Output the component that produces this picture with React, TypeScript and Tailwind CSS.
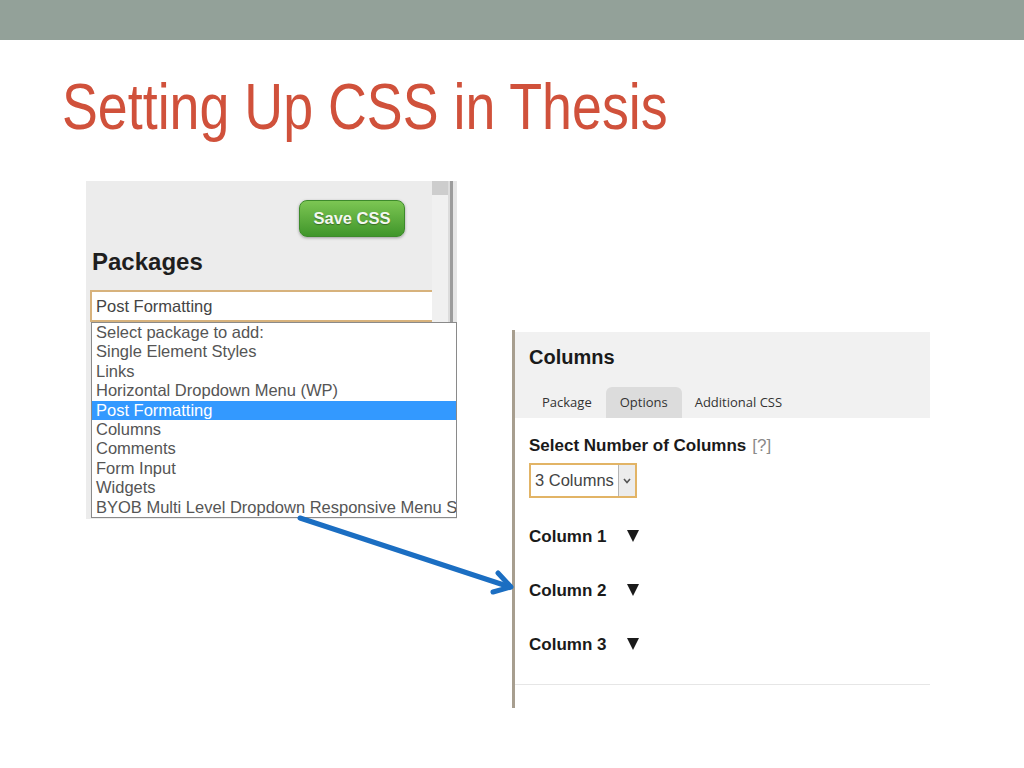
import React from 'react';

const packages = [
  'Select package to add:',
  'Single Element Styles',
  'Links',
  'Horizontal Dropdown Menu (WP)',
  'Post Formatting',
  'Columns',
  'Comments',
  'Form Input',
  'Widgets',
  'BYOB Multi Level Dropdown Responsive Menu S',
];

const PackagesShot = () => (
  <div className="w-[371px] h-[338px] bg-[#ececec] flex flex-col font-['Liberation_Sans',Arial,sans-serif]">
    <div className="flex h-[141px]">
      <div className="w-[346px] flex flex-col">
        <div className="flex justify-end pr-[27px] pt-[19px]">
          <div className="w-[106px] h-[37px] rounded-[8px] border border-[#3d8a2b] bg-gradient-to-b from-[#7cc653] to-[#3f962a] shadow-[0_1px_3px_rgba(0,0,0,0.35)] flex items-center justify-center text-[16.5px] font-bold text-[#f4f8f0] [text-shadow:0_1px_1px_rgba(0,0,0,0.35)]">
            Save CSS
          </div>
        </div>
        <div className="ml-[6px] mt-[13px] text-[24px] leading-none font-bold text-[#1e1e1e]">Packages</div>
        <div className="ml-[4px] mt-[16px] h-[34px] bg-white border-2 border-r-0 border-[#d7b27c] flex items-center pl-[4px] text-[16.5px] text-[#444]">
          Post Formatting
        </div>
      </div>
      <div className="flex">
        <div className="w-[16px] bg-[#f0f0f0] flex flex-col">
          <div className="h-[14px] bg-[#cdcdcd]" />
        </div>
        <div className="w-[2px] bg-[#dcdcdc]" />
        <div className="w-[3px] bg-[#9c9c9c]" />
        <div className="w-[4px] bg-[#e6e6e6]" />
      </div>
    </div>
    <div className="ml-[5px] h-[196px] bg-white border border-[#8a8a8a] overflow-hidden">
      {packages.map((p) => (
        <div
          key={p}
          className={
            p === 'Post Formatting'
              ? 'h-[19.4px] leading-[19.4px] pl-[4px] text-[16.5px] whitespace-nowrap bg-[#3399ff] text-white'
              : 'h-[19.4px] leading-[19.4px] pl-[4px] text-[16.5px] whitespace-nowrap text-[#555]'
          }
        >
          {p}
        </div>
      ))}
    </div>
  </div>
);

const Triangle = () => (
  <svg width="12" height="12" viewBox="0 0 12 12" className="ml-[21px]">
    <polygon points="0,0 12,0 6,12" fill="#1a1a1a" />
  </svg>
);

const ColumnsShot = () => (
  <div className="w-[418px] h-[378px] bg-white border-l-[3px] border-[#a79e8f] flex flex-col font-['Liberation_Sans',Arial,sans-serif]">
    <div className="mt-[2px] bg-[#f1f1f1] h-[86px] flex flex-col">
      <div className="pl-[14px] pt-[15px] text-[20px] leading-none font-bold text-[#1a1a1a]">Columns</div>
      <div className="flex pl-[13px] mt-[20px] font-['Open_Sans',sans-serif] text-[13px] leading-[31px] text-[#333]">
        <div className="px-[14px]">Package</div>
        <div className="px-[14px] bg-[#dcdcdc] rounded-t-[6px]">Options</div>
        <div className="px-[13px]">Additional CSS</div>
      </div>
    </div>
    <div className="pl-[14px] flex flex-col items-start">
      <div className="mt-[19px] text-[17px] leading-none text-[#1a1a1a]">
        <span className="font-bold">Select Number of Columns</span>
        <span className="ml-[6px] text-[#8a8a8a]">[?]</span>
      </div>
      <div className="mt-[9px] h-[35px] w-[108px] border-2 border-[#e2b466] flex items-stretch">
        <div className="flex-1 flex items-center pl-[4px] text-[16.5px] text-[#444]">3 Columns</div>
        <div className="w-[17px] bg-[#ececec] border-l border-[#b5b5b5] flex items-center justify-center">
          <svg width="8" height="6" viewBox="0 0 8 6">
            <polyline points="1,1 4,4.5 7,1" fill="none" stroke="#555" strokeWidth="1.6" />
          </svg>
        </div>
      </div>
      <div className="mt-[30px] flex items-baseline text-[17px] leading-none font-bold text-[#1a1a1a]">
        <span>Column 1</span>
        <Triangle />
      </div>
      <div className="mt-[37px] flex items-baseline text-[17px] leading-none font-bold text-[#1a1a1a]">
        <span>Column 2</span>
        <Triangle />
      </div>
      <div className="mt-[37px] flex items-baseline text-[17px] leading-none font-bold text-[#1a1a1a]">
        <span>Column 3</span>
        <Triangle />
      </div>
    </div>
    <div className="mt-[31px] h-px bg-[#e6e6e6]" />
  </div>
);

export default function App() {
  return (
    <div className="relative w-[1024px] h-[768px] bg-white overflow-hidden font-['Liberation_Sans',Arial,sans-serif]">
      <div className="h-[40px] bg-[#93a199]" />
      <h1 className="mt-[35px] ml-[62px] text-[64px] leading-none text-[#d0513b] origin-left scale-x-[0.84] whitespace-nowrap">
        Setting Up CSS in Thesis
      </h1>
      <div className="flex items-start mt-[42px] ml-[86px]">
        <PackagesShot />
        <div className="ml-[55px] mt-[149px]">
          <ColumnsShot />
        </div>
      </div>
      <svg className="absolute inset-0 pointer-events-none" width="1024" height="768">
        <line x1="300" y1="518" x2="510" y2="587" stroke="#1b6ec2" strokeWidth="5" strokeLinecap="round" />
        <polyline points="493,592 511,587 498,573" fill="none" stroke="#1b6ec2" strokeWidth="5" strokeLinecap="round" strokeLinejoin="round" />
      </svg>
    </div>
  );
}
